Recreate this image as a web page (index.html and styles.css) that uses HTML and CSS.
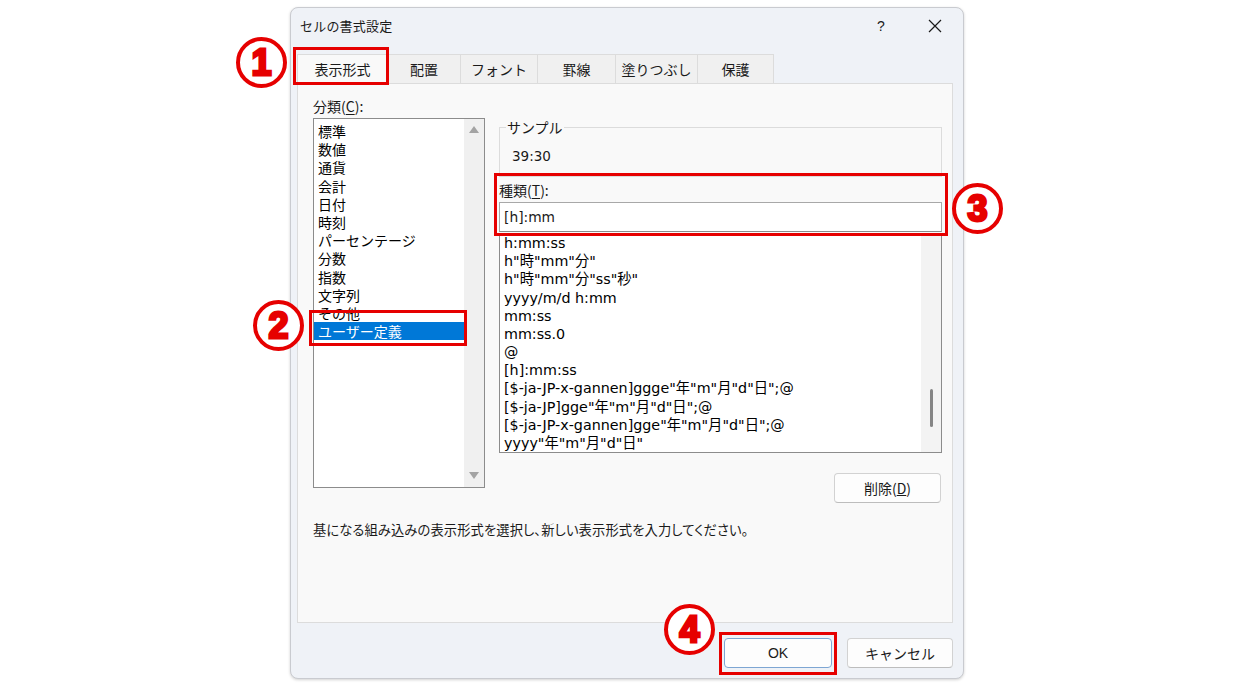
FILE: index.html
```html
<!DOCTYPE html>
<html lang="ja">
<head>
<meta charset="utf-8">
<title>セルの書式設定</title>
<link rel="stylesheet" href="styles.css">
</head>
<body>
<div class="stage">
  <div class="dialog">
    <div class="titlebar">
      <span class="title">セルの書式設定</span>
      <span class="tb-help">?</span>
      <span class="tb-close">
        <svg width="14" height="14" viewBox="0 0 14 14"><path d="M1 1 L13 13 M13 1 L1 13" stroke="#1a1a1a" stroke-width="1.2" fill="none"/></svg>
      </span>
    </div>
    <div class="tabs">
      <div class="tab tab-active w90">表示形式</div>
      <div class="tab w73">配置</div>
      <div class="tab w77">フォント</div>
      <div class="tab w78">罫線</div>
      <div class="tab w82">塗りつぶし</div>
      <div class="tab w76">保護</div>
    </div>
    <div class="panel">
      <div class="cols">
        <div class="leftcol">
          <div class="label">分類(<u>C</u>):</div>
          <div class="listbox">
            <ul class="items">
              <li>標準</li>
              <li>数値</li>
              <li>通貨</li>
              <li>会計</li>
              <li>日付</li>
              <li>時刻</li>
              <li>パーセンテージ</li>
              <li>分数</li>
              <li>指数</li>
              <li>文字列</li>
              <li>その他</li>
              <li class="selected">ユーザー定義</li>
            </ul>
            <div class="vscroll">
              <span class="arrow-up"></span>
              <span class="arrow-down"></span>
            </div>
          </div>
        </div>
        <div class="rightcol">
          <fieldset class="sample">
            <legend>サンプル</legend>
            <div class="sample-val">39:30</div>
          </fieldset>
          <div class="label type-label">種類(<u>T</u>):</div>
          <div class="input">[h]:mm</div>
          <div class="fmtlist">
            <ul class="fmt-items">
              <li>h:mm:ss</li>
              <li>h"時"mm"分"</li>
              <li>h"時"mm"分"ss"秒"</li>
              <li>yyyy/m/d h:mm</li>
              <li>mm:ss</li>
              <li>mm:ss.0</li>
              <li>@</li>
              <li>[h]:mm:ss</li>
              <li>[$-ja-JP-x-gannen]ggge"年"m"月"d"日";@</li>
              <li>[$-ja-JP]gge"年"m"月"d"日";@</li>
              <li>[$-ja-JP-x-gannen]gge"年"m"月"d"日";@</li>
              <li>yyyy"年"m"月"d"日"</li>
            </ul>
            <div class="thinscroll"><span class="thumb"></span></div>
          </div>
          <div class="delrow"><span class="btn btn-del">削除(<u>D</u>)</span></div>
        </div>
      </div>
      <p class="desc">基になる組み込みの表示形式を選択し、新しい表示形式を入力してください。</p>
    </div>
    <div class="footer">
      <span class="btn btn-ok">OK</span>
      <span class="btn btn-cancel">キャンセル</span>
    </div>
  </div>

  <div class="mark-box box1"></div>
  <div class="mark-box box2"></div>
  <div class="mark-box box3"></div>
  <div class="mark-box box4"></div>
  <div class="mark-circle c1">1</div>
  <div class="mark-circle c2">2</div>
  <div class="mark-circle c3">3</div>
  <div class="mark-circle c4">4</div>
</div>
</body>
</html>
```

FILE: styles.css
```css
* { box-sizing: border-box; }

html, body {
  margin: 0;
  padding: 0;
  background: #ffffff;
}

body {
  font-family: "Noto Sans CJK JP", "Noto Sans", sans-serif;
  color: #1a1a1a;
  font-size: 14px;
}

.stage {
  position: relative;
  width: 1255px;
  height: 687px;
  overflow: hidden;
}

.dialog {
  margin: 7px 0 0 290px;
  width: 674px;
  height: 672px;
  background: #eff2f7;
  border: 1px solid #c9cbd0;
  border-radius: 8px;
  box-shadow: 0 1px 3px rgba(0,0,0,0.18);
  display: flex;
  flex-direction: column;
}

/* title bar */
.titlebar {
  height: 35px;
  display: flex;
  align-items: center;
  padding-left: 9px;
}
.title {
  font-size: 13px;
  flex: 1;
  letter-spacing: 0.2px;
}
.tb-help {
  font-family: "Liberation Sans", sans-serif;
  font-size: 14px;
  width: 20px;
  text-align: center;
  margin-right: 37px;
}
.tb-close {
  display: flex;
  width: 14px;
  margin-right: 21px;
}

/* tabs */
.tabs {
  display: flex;
  margin: 11px 0 0 6px;
  height: 29px;
}
.tab {
  height: 29px;
  display: flex;
  align-items: center;
  justify-content: center;
  border: 1px solid #dcdcdc;
  border-bottom: none;
  border-left: none;
  background: #f0f0f0;
  font-size: 14px;
  padding-bottom: 1px;
}
.tab:first-child { border-left: 1px solid #dcdcdc; }
.tab-active { background: #f9f9f9; }
.w90 { width: 91px; }
.w73 { width: 73px; }
.w77 { width: 77px; }
.w78 { width: 78px; }
.w82 { width: 82px; }
.w76 { width: 76px; }

/* panel */
.panel {
  margin: 0 10px 0 6px;
  height: 540px;
  background: #f9f9f9;
  border: 1px solid #dcdcdc;
  padding: 13px 0 0 15px;
}
.cols {
  display: flex;
  gap: 14px;
}
.label {
  line-height: 18px;
  height: 18px;
  margin-bottom: 3px;
}
.label u { text-underline-offset: 2px; }

.leftcol { width: 172px; }
.listbox {
  width: 172px;
  height: 370px;
  background: #fff;
  border: 1px solid #8c8c8c;
  display: flex;
  overflow: hidden;
}
.items {
  list-style: none;
  margin: 0;
  padding: 3px 0 0 0;
  flex: 1;
}
.items li {
  height: 18.2px;
  line-height: 18px;
  padding-left: 4px;
  white-space: nowrap;
  color: #000;
}
.items li.selected {
  background: #0078d7;
  color: #fff;
}
.vscroll {
  width: 20px;
  background: #f0f0f0;
  display: flex;
  flex-direction: column;
  justify-content: space-between;
  align-items: center;
  padding: 7px 0 8px;
}
.arrow-up, .arrow-down {
  width: 0;
  height: 0;
  border-left: 5px solid transparent;
  border-right: 5px solid transparent;
}
.arrow-up { border-bottom: 7px solid #a3a3a3; }
.arrow-down { border-top: 7px solid #a3a3a3; }

/* right column */
.rightcol {
  width: 443px;
  display: flex;
  flex-direction: column;
  margin-top: 21px;
}
.sample-val, .input, .fmt-items {
  font-family: "DejaVu Sans", "Noto Sans CJK JP", sans-serif;
}
.sample {
  margin: 0;
  width: 443px;
  border: 1px solid #dcdcdc;
  padding: 11px 0 10px 12px;
  height: 59px;
}
.sample legend {
  padding: 0 1px;
  margin-left: -6px;
  line-height: 18px;
  font-size: 14px;
}
.sample-val {
  line-height: 18px;
  font-size: 13.5px;
}
.type-label { margin-top: 4px; margin-bottom: 3px; }
.input {
  height: 30px;
  width: 443px;
  background: #fff;
  border: 1px solid #a8a8a8;
  border-bottom-color: #8a8a8a;
  line-height: 28px;
  padding-left: 4px;
  font-size: 13.8px;
}
.fmtlist {
  margin-top: 1px;
  width: 443px;
  height: 220px;
  background: #fff;
  border: 1px solid #8c8c8c;
  display: flex;
  overflow: hidden;
}
.fmt-items {
  list-style: none;
  margin: 0;
  padding: 0;
  flex: 1;
  font-size: 14.3px;
}
.fmt-items li {
  height: 18.18px;
  line-height: 18px;
  padding-left: 4px;
  white-space: nowrap;
  color: #000;
}
.thinscroll {
  width: 20px;
  background: #f3f3f3;
  display: flex;
  justify-content: center;
  padding-top: 155px;
}
.thumb {
  width: 3px;
  height: 38px;
  border-radius: 2px;
  background: #858585;
}
.delrow {
  display: flex;
  justify-content: flex-end;
  margin-top: 20px;
  padding-right: 1px;
}

/* buttons */
.btn {
  display: inline-flex;
  align-items: center;
  justify-content: center;
  height: 30px;
  background: #fdfdfd;
  border: 1px solid #d2d2d2;
  border-bottom-color: #bdbdbd;
  border-radius: 4px;
  font-size: 14px;
  color: #1a1a1a;
}
.btn-del { width: 107px; }
.btn-ok {
  width: 108px;
  border: 1px solid #7ea6d3;
  font-family: "Liberation Sans", sans-serif;
}
.btn-cancel { width: 106px; }

.desc {
  margin: 17px 0 0 0;
  line-height: 20px;
  font-size: 13.3px;
  font-feature-settings: "palt";
  letter-spacing: 0.1px;
}

.footer {
  flex: 1;
  display: flex;
  justify-content: flex-end;
  align-items: flex-start;
  gap: 15px;
  padding: 15px 10px 0 0;
}

/* annotations */
.mark-box {
  position: absolute;
  border: 3px solid #e60000;
}
.box1 { left: 293px; top: 47px; width: 96px; height: 38px; }
.box2 { left: 309px; top: 310px; width: 158px; height: 36px; }
.box3 { left: 494px; top: 173px; width: 454px; height: 63px; }
.box4 { left: 719px; top: 632px; width: 118px; height: 43px; }

.mark-circle {
  position: absolute;
  width: 51px;
  height: 51px;
  border: 4px solid #e60000;
  border-radius: 50%;
  background: #fff;
  color: #e60000;
  font-family: "Liberation Sans", "DejaVu Sans", sans-serif;
  font-weight: 900;
  font-size: 36px;
  display: flex;
  align-items: center;
  justify-content: center;
  line-height: 1;
  -webkit-text-stroke: 2.8px #e60000;
}
.c1 { left: 236px; top: 37px; }
.c2 { left: 253px; top: 300px; }
.c3 { left: 952px; top: 183px; }
.c4 { left: 664px; top: 604px; }
```
